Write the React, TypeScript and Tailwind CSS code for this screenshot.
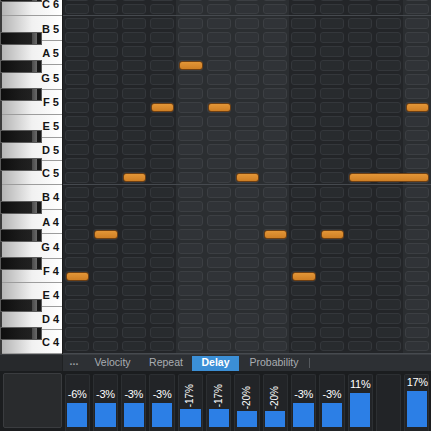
import React from 'react'

// semitone rows from the top (C#6 is only partly visible)
const ROWS = [
  'C#6', 'C6', 'B5', 'A#5', 'A5', 'G#5', 'G5', 'F#5', 'F5', 'E5', 'D#5', 'D5', 'C#5',
  'C5', 'B4', 'A#4', 'A4', 'G#4', 'G4', 'F#4', 'F4', 'E4', 'D#4', 'D4', 'C#4', 'C4',
]
const ROW_H = 14.083
const ROW_TOP = -12.08

// white keys: C-E share 5 semitones, F-B share 7
const WHITE_KEYS: { id: string; label: string; tall: boolean }[] = [
  { id: 'D6', label: '', tall: false },
  { id: 'C6', label: 'C 6', tall: false },
  { id: 'B5', label: 'B 5', tall: true },
  { id: 'A5', label: 'A 5', tall: true },
  { id: 'G5', label: 'G 5', tall: true },
  { id: 'F5', label: 'F 5', tall: true },
  { id: 'E5', label: 'E 5', tall: false },
  { id: 'D5', label: 'D 5', tall: false },
  { id: 'C5', label: 'C 5', tall: false },
  { id: 'B4', label: 'B 4', tall: true },
  { id: 'A4', label: 'A 4', tall: true },
  { id: 'G4', label: 'G 4', tall: true },
  { id: 'F4', label: 'F 4', tall: true },
  { id: 'E4', label: 'E 4', tall: false },
  { id: 'D4', label: 'D 4', tall: false },
  { id: 'C4', label: 'C 4', tall: false },
]

const NOTES: { col: number; row: string; len: number }[] = [
  { col: 0, row: 'F4', len: 1 },
  { col: 1, row: 'G#4', len: 1 },
  { col: 2, row: 'C5', len: 1 },
  { col: 3, row: 'F5', len: 1 },
  { col: 4, row: 'G#5', len: 1 },
  { col: 5, row: 'F5', len: 1 },
  { col: 6, row: 'C5', len: 1 },
  { col: 7, row: 'G#4', len: 1 },
  { col: 8, row: 'F4', len: 1 },
  { col: 9, row: 'G#4', len: 1 },
  { col: 10, row: 'C5', len: 3 },
  { col: 12, row: 'F5', len: 1 },
]

const DELAYS: { label: string; h: number; rotated?: boolean }[] = [
  { label: '-6%', h: 24 },
  { label: '-3%', h: 24 },
  { label: '-3%', h: 24 },
  { label: '-3%', h: 24 },
  { label: '-17%', h: 18, rotated: true },
  { label: '-17%', h: 18, rotated: true },
  { label: '-20%', h: 16, rotated: true },
  { label: '-20%', h: 16, rotated: true },
  { label: '-3%', h: 24 },
  { label: '-3%', h: 24 },
  { label: '11%', h: 34 },
  { label: '', h: 0 },
  { label: '17%', h: 36 },
]

const COLS = Array.from({ length: 13 }, (_, i) => i)

function Piano() {
  const black = ROWS.map((r, i) => ({ r, i })).filter(x => x.r.includes('#'))
  return (
    <div className="relative h-[354px] w-[63px] shrink-0 overflow-hidden border-r border-[#1a1a1a] bg-[#3b3b3b] pl-[2px]">
      <div className="mt-[-31px] flex flex-col">
        {WHITE_KEYS.map(k => (
          <div
            key={k.id}
            className={`flex items-center justify-end border-b border-[#9c9c9c] bg-gradient-to-r from-[#b4b4b4] via-[#f1f1f1] to-white pr-[3px] pt-[2px] text-[11px] font-bold text-[#141414] ${
              k.tall ? 'h-[24.65px]' : 'h-[23.47px]'
            }`}
          >
            {k.label}
          </div>
        ))}
      </div>
      {black.map(({ r, i }) => (
        <div
          key={r}
          className="absolute left-0 flex h-[13px] w-[42px] items-stretch border border-[#5a5a5a] bg-gradient-to-r from-[#0e0e0e] via-[#1c1c1c] to-[#262626]"
          style={{ top: ROW_TOP + i * ROW_H + 1.5 }}
        >
          <div className="flex-1" />
          <div className="w-[5px] bg-gradient-to-r from-[#4a4a4a] to-[#6a6a6a]" />
          <div className="w-[4px] bg-[#161616]" />
        </div>
      ))}
    </div>
  )
}

function Grid() {
  return (
    <div className="relative h-[354px] w-[368px] overflow-hidden bg-[#232528]">
      <div className="mt-[-12.08px] flex flex-col">
        {ROWS.map(r => {
          const octave = r.startsWith('C') && !r.includes('#')
          return (
            <div
              key={r}
              className={`relative grid h-[14.083px] grid-cols-[repeat(13,minmax(0,1fr))] ${
                octave ? 'border-b border-[#464a4f]' : ''
              }`}
            >
              {COLS.map(c => {
                const light = Math.floor(c / 4) % 2 === 1
                return (
                  <div key={c} className={`px-[2px] py-[1.5px] ${light ? 'bg-[#2b2e31]' : 'bg-[#232528]'}`}>
                    <div
                      className={`h-full rounded-[3px] border ${
                        light ? 'border-[#3c3f43] bg-[#303337]' : 'border-[#34373b] bg-[#282b2e]'
                      }`}
                    />
                  </div>
                )
              })}
              {NOTES.filter(n => n.row === r).map(n => (
                <div
                  key={n.col}
                  className="absolute top-[2.5px] h-[9px] rounded-[3px] border border-[#6e3f12] bg-gradient-to-b from-[#e39637] to-[#cf7f24]"
                  style={{
                    left: `calc(${n.col} * 100% / 13 + 3px)`,
                    width: `calc(${n.len} * 100% / 13 - 5px)`,
                  }}
                />
              ))}
            </div>
          )
        })}
      </div>
    </div>
  )
}

function TabBar() {
  return (
    <div className="flex h-[17px] items-center border-t border-[#3a3d41] bg-[#2d3034] text-[10.5px] text-[#a9adb2]">
      <div className="h-full w-[63px] border-r border-[#1f2123] bg-[#27292c]" />
      <div className="w-[22px] pb-[4px] text-center font-bold leading-none text-[#9a9ea3]">...</div>
      <div className="w-[55px] text-center">Velocity</div>
      <div className="w-[52px] text-center">Repeat</div>
      <div className="flex h-[15px] w-[47px] items-center justify-center bg-[#3b8fd6] font-bold text-white">Delay</div>
      <div className="w-[70px] text-center">Probability</div>
      <div className="h-[10px] w-px bg-[#55595e]" />
    </div>
  )
}

function DelayLanes() {
  return (
    <div className="flex h-[60px] bg-[#1b1d1f]">
      <div className="w-[63px] shrink-0 pb-[3px] pl-[3px] pr-[1px] pt-[2px]">
        <div className="h-full rounded-[2px] border border-[#3a3c3f] bg-[#292b2d]" />
      </div>
      <div className="grid w-[368px] grid-cols-[repeat(13,minmax(0,1fr))]">
        {DELAYS.map((d, i) => (
          <div key={i} className="px-[1.5px] pt-[3px]">
            <div className="flex h-full flex-col items-stretch justify-end rounded-t-[2px] border border-b-0 border-[#2c2f32] bg-[#222427] px-[1.5px] pb-[4px]">
              {d.label &&
                (d.rotated ? (
                  <div className="mb-[2px] self-center rotate-180 text-[10px] leading-none text-white [writing-mode:vertical-rl]">
                    {d.label}
                  </div>
                ) : (
                  <div className="mb-[3px] text-center text-[11px] leading-none tracking-[-0.3px] text-white">{d.label}</div>
                ))}
              {d.h > 0 && <div className="bg-[#2c7fe6]" style={{ height: d.h }} />}
            </div>
          </div>
        ))}
      </div>
    </div>
  )
}

export default function App() {
  return (
    <div className="h-[431px] w-[431px] overflow-hidden bg-[#1b1d1f] font-['Liberation_Sans',Arial,sans-serif]">
      <div className="flex">
        <Piano />
        <Grid />
      </div>
      <TabBar />
      <DelayLanes />
    </div>
  )
}
